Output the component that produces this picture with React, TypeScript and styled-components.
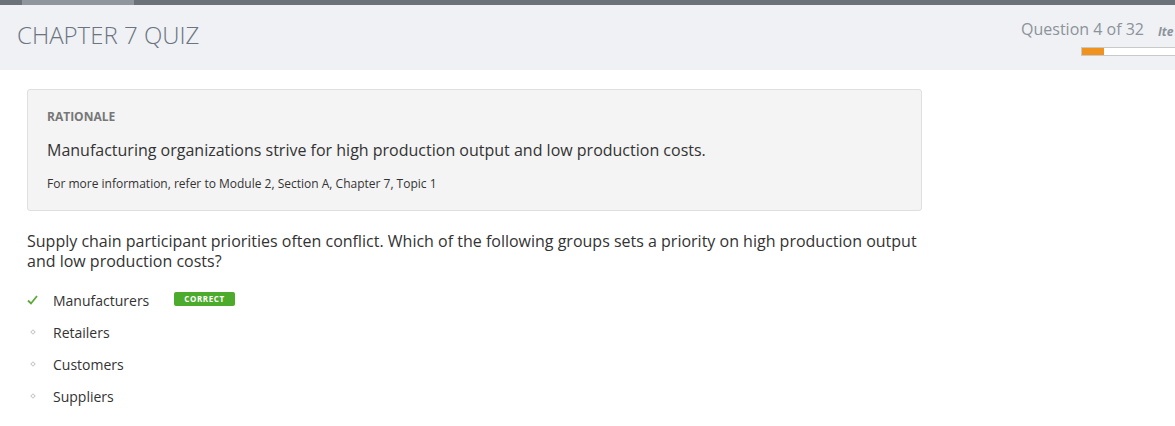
import React from "react";
import styled, { createGlobalStyle } from "styled-components";

const Global = createGlobalStyle`
  html, body { margin: 0; padding: 0; background: #fff; }
  body { font-family: "Open Sans", "Noto Sans", sans-serif; color: #333; overflow: hidden; }
  * { box-sizing: border-box; }
`;

const TopStripe = styled.div`
  height: 5px;
  background: #6b727a;
  display: flex;
`;
const StripeSegment = styled.div<{ $left: number; $width: number }>`
  margin-left: ${(p) => p.$left}px;
  width: ${(p) => p.$width}px;
  background: #8f969d;
`;

const Header = styled.header`
  height: 65px;
  background: #eff1f4;
  display: flex;
  justify-content: space-between;
  align-items: flex-start;
  padding-left: 17px;
  overflow: hidden;
`;

const Title = styled.h1`
  margin: 13px 0 0;
  font-size: 24px;
  font-weight: 300;
  color: #6b7480;
  letter-spacing: 0;
`;

const HeaderRight = styled.div`
  display: flex;
  align-items: flex-start;
  gap: 14px;
  margin-top: 13px;
`;

const ProgressCol = styled.div`
  display: flex;
  flex-direction: column;
  align-items: flex-end;
`;

const QuestionCount = styled.div`
  font-size: 16px;
  color: #8c939b;
  line-height: 22px;
`;

const ProgressTrack = styled.div`
  margin-top: 7px;
  width: 94px;
  height: 9px;
  border: 1px solid #c9c9c9;
  border-right: none;
  background: #fff;
  display: flex;
  align-self: flex-start;
  margin-left: 60px;
  margin-right: -34px;
`;

const ProgressFill = styled.div`
  background: #f0921e;
  height: 100%;
`;

const ItemLabel = styled.div`
  font-size: 12px;
  font-weight: 700;
  font-style: italic;
  color: #8c939b;
  margin-top: 5px;
  white-space: nowrap;
  width: 17px;
  overflow: hidden;
`;

const Main = styled.main`
  padding: 19px 0 0 27px;
  width: 922px;
`;

const Rationale = styled.section`
  background: #f4f4f4;
  border: 1px solid #dfdfdf;
  border-radius: 3px;
  padding: 18px 19px 16px;
  height: 122px;
`;

const RationaleLabel = styled.div`
  font-size: 12px;
  font-weight: 700;
  color: #777;
  line-height: 17px;
`;

const RationaleText = styled.p`
  margin: 14px 0 0;
  font-size: 16px;
  line-height: 22px;
  color: #333;
`;

const RationaleRef = styled.p`
  margin: 15px 0 0;
  font-size: 12px;
  line-height: 16px;
  color: #333;
`;

const QuestionText = styled.p`
  margin: 20px 0 0;
  font-size: 16px;
  line-height: 20px;
  color: #333;
  padding-right: 2px;
`;

const Options = styled.ul`
  list-style: none;
  margin: 13px 0 0;
  padding: 0;
`;

const Option = styled.li`
  display: flex;
  align-items: center;
  height: 32px;
`;

const Marker = styled.span`
  width: 26px;
  display: flex;
  align-items: center;
`;

const Diamond = styled.span`
  width: 4px;
  height: 4px;
  margin-left: 4px;
  border: 1px solid #c8c8c8;
  transform: rotate(45deg);
`;

const OptionText = styled.span`
  font-size: 14px;
  color: #333;
`;

const Badge = styled.span`
  margin-left: 25px;
  background: #4caa2c;
  color: #fff;
  font-size: 8px;
  font-weight: 700;
  letter-spacing: 0.6px;
  border-radius: 2px;
  padding: 0 10px;
  height: 14px;
  line-height: 14px;
  margin-top: -2px;
`;

const Check = () => (
  <svg width="11" height="10" viewBox="0 0 11 10">
    <path d="M1 5.5 L4 8.5 L10 1" fill="none" stroke="#5ea83a" strokeWidth="1.8" />
  </svg>
);

const options = [
  { label: "Manufacturers", correct: true },
  { label: "Retailers" },
  { label: "Customers" },
  { label: "Suppliers" },
];

const progress = 22;

export default function App() {
  return (
    <>
      <Global />
      <TopStripe>
        <StripeSegment $left={22} $width={112} />
      </TopStripe>
      <Header>
        <Title>CHAPTER 7 QUIZ</Title>
        <HeaderRight>
          <ProgressCol>
            <QuestionCount>Question 4 of 32</QuestionCount>
            <ProgressTrack>
              <ProgressFill style={{ width: `${progress}px` }} />
            </ProgressTrack>
          </ProgressCol>
          <ItemLabel>Ite</ItemLabel>
        </HeaderRight>
      </Header>
      <Main>
        <Rationale>
          <RationaleLabel>RATIONALE</RationaleLabel>
          <RationaleText>
            Manufacturing organizations strive for high production output and low production costs.
          </RationaleText>
          <RationaleRef>For more information, refer to Module 2, Section A, Chapter 7, Topic 1</RationaleRef>
        </Rationale>
        <QuestionText>
          Supply chain participant priorities often conflict. Which of the following groups sets a priority on high
          production output and low production costs?
        </QuestionText>
        <Options>
          {options.map((o) => (
            <Option key={o.label}>
              <Marker>{o.correct ? <Check /> : <Diamond />}</Marker>
              <OptionText>{o.label}</OptionText>
              {o.correct && <Badge>CORRECT</Badge>}
            </Option>
          ))}
        </Options>
      </Main>
    </>
  );
}
